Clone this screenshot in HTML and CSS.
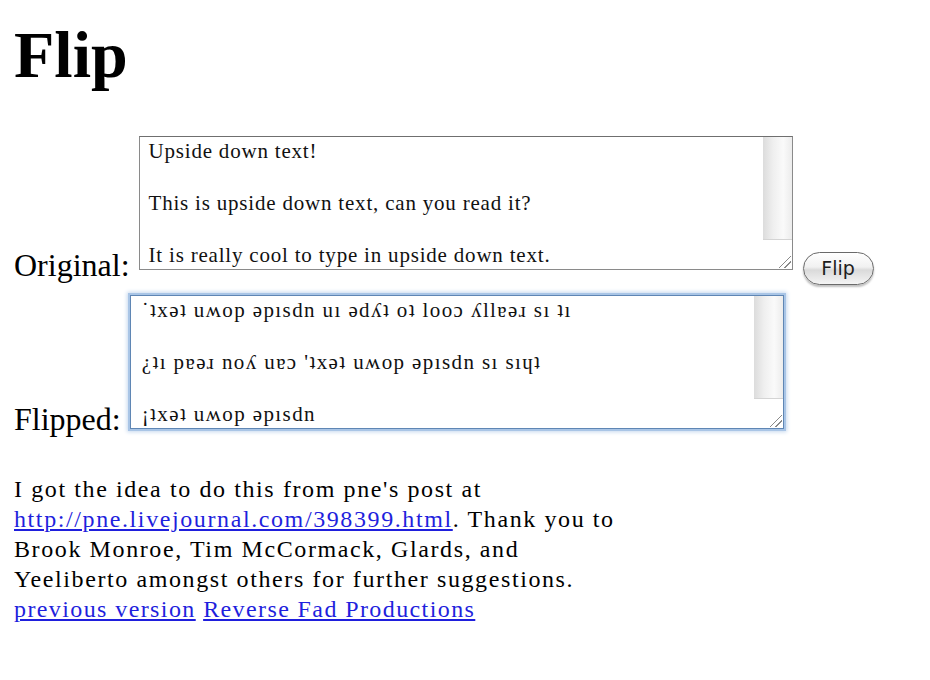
FILE: index.html
```html
<!DOCTYPE html>
<html lang="en">
<head>
  <meta charset="UTF-8" />
  <title>Flip</title>
  <link rel="stylesheet" href="styles.css">
</head>
<body>
  <h1>Flip</h1>

  <form class="flipper" onsubmit="return false">
    <div class="row first">
      <label for="original">Original:</label>
      <div class="box">
        <textarea id="original">Upside down text!

This is upside down text, can you read it?

It is really cool to type in upside down text.</textarea>
        <div class="scroll"><div class="track"></div><div class="grip"></div></div>
      </div>
      <button type="button" class="flip-btn" onclick="flipText()">Flip</button>
    </div>
    <div class="row second">
      <label for="flipped">Flipped:</label>
      <div class="box focused">
        <textarea id="flipped">˙ʇxǝʇ uʍop ǝpısdn uı ǝdʎʇ oʇ looɔ ʎllɐǝɹ sı ʇı

¿ʇı pɐǝɹ noʎ uɐɔ 'ʇxǝʇ uʍop ǝpısdn sı sıɥʇ

¡ʇxǝʇ uʍop ǝpısdn</textarea>
        <div class="scroll"><div class="track"></div><div class="grip"></div></div>
      </div>
    </div>
  </form>

  <p class="credits">
    I got the idea to do this from pne's post at
    <a href="#">http://pne.livejournal.com/398399.html</a>. Thank you to
    Brook Monroe, Tim McCormack, Glards, and
    Yeeliberto amongst others for further suggestions.
  </p>
  <div class="links">
    <a href="#">previous version</a> <a href="#">Reverse Fad Productions</a>
  </div>

  <script>
    const flipMap = {
      a: 'ɐ', b: 'q', c: 'ɔ', d: 'p', e: 'ǝ', f: 'ɟ', g: 'ƃ', h: 'ɥ', i: 'ı',
      j: 'ɾ', k: 'ʞ', l: 'l', m: 'ɯ', n: 'u', o: 'o', p: 'd', q: 'b', r: 'ɹ',
      s: 's', t: 'ʇ', u: 'n', v: 'ʌ', w: 'ʍ', x: 'x', y: 'ʎ', z: 'z',
      '.': '˙', ',': "'", '!': '¡', '?': '¿', "'": ',', '(': ')', ')': '('
    };

    function flipText() {
      const src = document.getElementById('original').value.toLowerCase();
      let out = '';
      for (let i = src.length - 1; i >= 0; i--) {
        out += flipMap[src[i]] || src[i];
      }
      document.getElementById('flipped').value = out;
    }
  </script>
</body>
</html>
```

FILE: styles.css
```css
body {
  margin: 0;
  padding: 0 14px;
  font-family: 'Liberation Serif', 'Times New Roman', serif;
  color: #000;
  background: #fff;
}
h1 {
  font-size: 66px;
  line-height: 76px;
  font-weight: bold;
  margin: 17px 0 43px;
}
.row {
  display: flex;
  align-items: flex-end;
}
.row.second {
  margin-top: 10px;
}
.row label {
  font-size: 32px;
  line-height: 36px;
  padding-bottom: 2px;
  margin-right: 9px;
}
.box {
  box-sizing: border-box;
  display: flex;
  width: 654px;
  height: 134px;
  border: 1px solid #8a8a8a;
  border-top-color: #6f6f6f;
  background: #fff;
}
.first .box {
  margin-bottom: 15px;
}
.second .box {
  margin-bottom: 10px;
}
.box textarea {
  flex: 1;
  min-width: 0;
  padding: 1px 9px;
  margin: 0;
  border: none;
  outline: none;
  resize: none;
  overflow: hidden;
  font-family: 'Liberation Serif', 'DejaVu Serif', serif;
  font-size: 21px;
  line-height: 26px;
  letter-spacing: 0.8px;
  color: #111;
  background: transparent;
}
.box.focused {
  border-color: #5f86b4;
  box-shadow: 0 0 0 2px #a9c5e6, 0 0 4px 3px #c6d8ee;
}
.box.focused textarea {
  padding-left: 11px;
  letter-spacing: 1.4px;
}
.scroll {
  width: 29px;
  display: flex;
  flex-direction: column;
}
.track {
  flex: 1;
  background: linear-gradient(to right, #dcdcdc, #efefef 35%, #fafafa 70%, #ececec);
  border-bottom: 1px solid #d4d4d4;
}
.grip {
  height: 29px;
  background:
    linear-gradient(-45deg, transparent 0 4px, #8a8a8a 4px 5px, transparent 5px 8px, #8a8a8a 8px 9px, transparent 9px) right 1px bottom 1px / 13px 13px no-repeat,
    #fff;
}
.flip-btn {
  align-self: flex-end;
  margin-left: 10px;
  width: 71px;
  height: 33px;
  padding: 0 0 2px;
  font-family: 'DejaVu Sans', 'Liberation Sans', sans-serif;
  font-size: 19px;
  color: #1e1e1e;
  border: 1px solid #6a6a6a;
  border-radius: 17px;
  background: linear-gradient(#ffffff, #f1f1f1 45%, #dadada 55%, #f4f4f4);
  box-shadow: 0 2px 2px rgba(0, 0, 0, 0.25);
  cursor: pointer;
}
.credits {
  width: 605px;
  margin: 35px 0 0;
  font-size: 24px;
  line-height: 30px;
  letter-spacing: 1.6px;
}
.links {
  font-size: 24px;
  line-height: 30px;
  letter-spacing: 1.4px;
}
a {
  color: #1f1fdd;
}
```
